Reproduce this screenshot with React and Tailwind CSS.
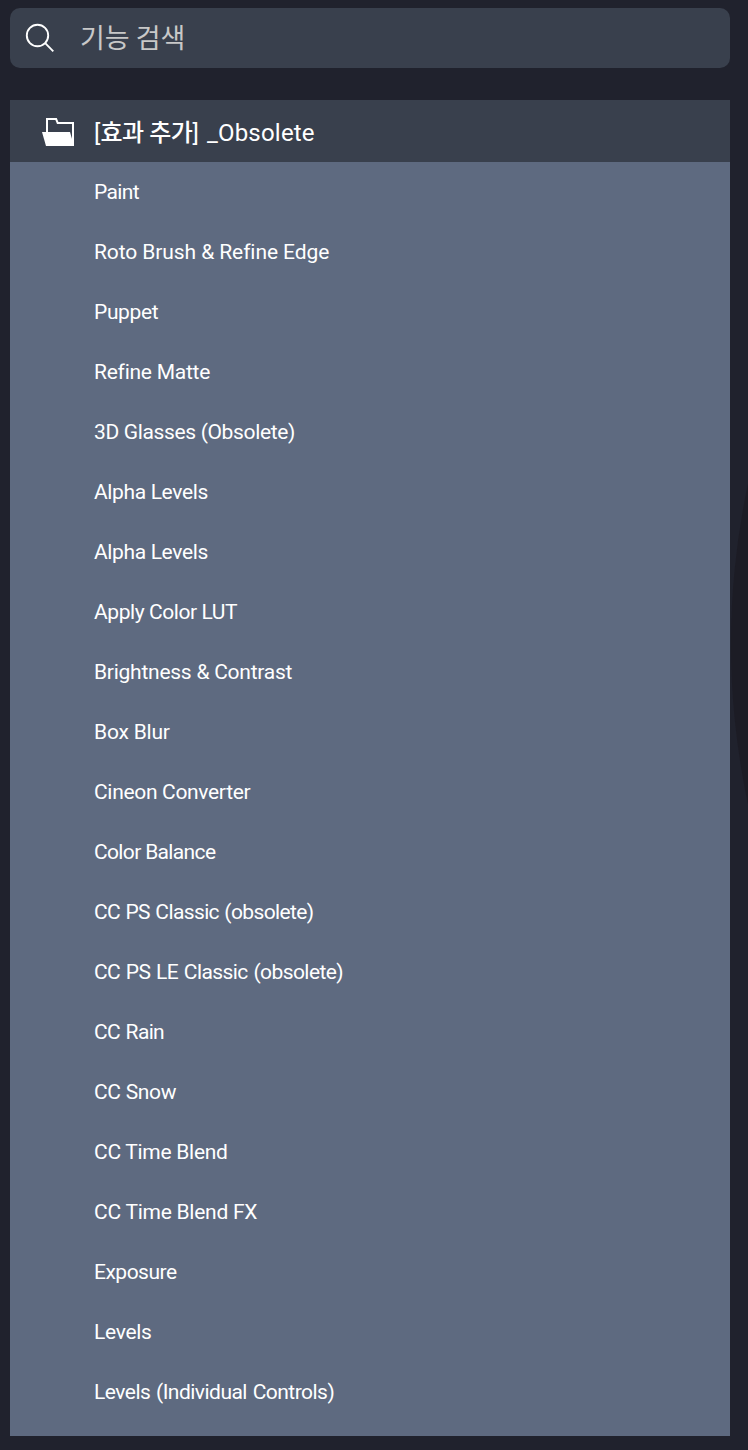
const items = [
  ["Paint", "tracking-[-0.6px]"],
  ["Roto Brush & Refine Edge", "tracking-[-0.09px]"],
  ["Puppet", "tracking-[-0.35px]"],
  ["Refine Matte", "tracking-[-0.25px]"],
  ["3D Glasses (Obsolete)", "tracking-[-0.35px]"],
  ["Alpha Levels", "tracking-[-0.36px]"],
  ["Alpha Levels", "tracking-[-0.36px]"],
  ["Apply Color LUT", "tracking-[-0.43px]"],
  ["Brightness & Contrast", "tracking-[-0.25px]"],
  ["Box Blur", "tracking-[-0.2px]"],
  ["Cineon Converter", "tracking-[-0.32px]"],
  ["Color Balance", "tracking-[-0.65px]"],
  ["CC PS Classic (obsolete)", "tracking-[-0.62px] [word-spacing:0.8px]"],
  ["CC PS LE Classic (obsolete)", "tracking-[-0.57px] [word-spacing:1px]"],
  ["CC Rain", "tracking-[-0.65px] [word-spacing:1px]"],
  ["CC Snow", "tracking-[-0.3px]"],
  ["CC Time Blend", "tracking-[-0.28px]"],
  ["CC Time Blend FX", "tracking-[-0.25px]"],
  ["Exposure", "tracking-[-0.5px]"],
  ["Levels", "tracking-[-0.3px]"],
  ["Levels (Individual Controls)", "tracking-[-0.52px] [word-spacing:1px]"],
];

function SearchIcon() {
  return (
    <svg width="30" height="30" viewBox="0 0 30 30" fill="none" stroke="#fff" strokeWidth="1.9">
      <circle cx="12.5" cy="12.5" r="10.7" />
      <path d="M20.2 20.2 28.3 28.3" />
    </svg>
  );
}

function FolderIcon() {
  return (
    <svg width="32" height="28" viewBox="0 0 32 28">
      <path d="M4 14.5V0h10.8l1.6 4H32v24h-2V6H15L13.4 2H6v12.5z" fill="#fff" />
      <path d="M0 14H28l2.3 8L32 28H4z" fill="#fff" />
    </svg>
  );
}

export default function App() {
  return (
    <div className="relative flex h-[1450px] w-[748px] flex-col overflow-hidden bg-[#20222d] px-[10px] pt-2 font-['Roboto','Noto_Sans_CJK_KR',sans-serif] text-white">
      <div className="absolute top-[-117px] left-[731px] size-[1522px] rounded-full bg-[#1c1c25]" />
      <div className="relative flex h-[60px] w-[720px] items-center rounded-[10px] bg-[#39404d] pl-[15px]">
        <SearchIcon />
        <span className="mb-[2px] ml-[25px] font-['Noto_Sans_CJK_KR',sans-serif] text-[27px] font-normal text-[#c8c8c8]">기능 검색</span>
      </div>
      <div className="relative mt-8 h-[1336px] w-[720px] bg-[#5e6a80]">
        <div className="flex h-[62px] items-center bg-[#39404d] pt-[2px] pl-8">
          <FolderIcon />
          <span className="mt-[2px] ml-[20px] text-[24px] whitespace-pre">
            [<span className="font-medium tracking-[-0.45px]">효과 추가</span>]
            <span className="ml-[2px] tracking-[0.2px]"> _Obsolete</span>
          </span>
        </div>
        <ul>
          {items.map(([name, tracking], i) => (
            <li key={i} className="flex h-[60px] items-center pt-[2px] pl-[84px] text-[21px]">
              <span className={tracking}>{name}</span>
            </li>
          ))}
        </ul>
      </div>
    </div>
  );
}
